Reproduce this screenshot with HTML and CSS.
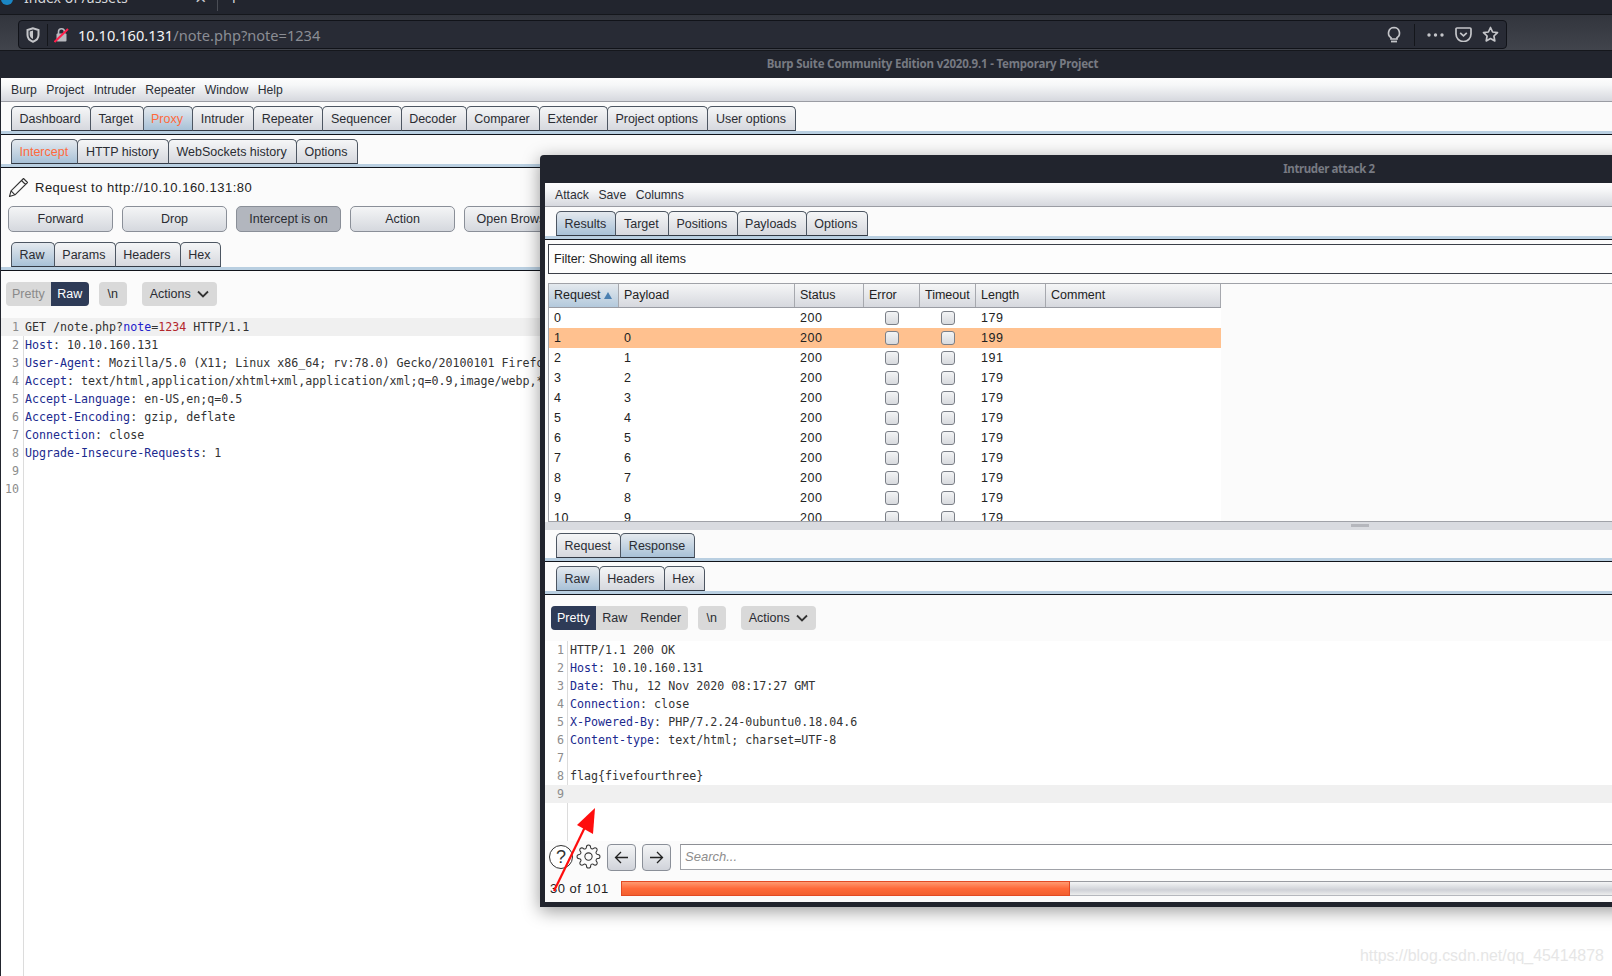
FILE: index.html
```html
<!DOCTYPE html>
<html lang="en">
<head>
<meta charset="utf-8">
<title>Burp Suite</title>
<link rel="stylesheet" href="styles.css">
</head>
<body>
<div class="page">
  <div class="tabstrip">
    <span class="favicon"></span>
    <span class="tabtitle">Index of /assets</span>
    <span class="tabclose">×</span>
    <span class="tabsep"></span>
    <span class="tabplus">+</span>
  </div>
  <div class="navbar">
    <div class="urlbar">
      <svg class="ic-shield" width="14" height="16" viewBox="0 0 14 16"><path d="M7 1.200 1.500 3v5c0 3.400 2.400 5.600 5.500 6.800 3.100-1.200 5.500-3.400 5.500-6.800V3z" fill="none" stroke="#c4c5c9" stroke-width="2"/><path d="M7 3.500v8.500c-2-1-3.300-2.400-3.300-4.500V4.600z" fill="#c4c5c9"/></svg>
      <span class="urlsep"></span>
      <svg class="ic-lock" width="15" height="16" viewBox="0 0 15 16"><rect x="2.500" y="6.500" width="10" height="8" rx="1" fill="#b9bac0"/><path d="M4.500 7V4.800a3 3 0 0 1 6 0V7" fill="none" stroke="#b9bac0" stroke-width="1.600"/><path d="M0.500 15 14 2" stroke="#ff1f4b" stroke-width="2"/></svg>
      <span class="url"><b>10.10.160.131</b>/note.php?note=1234</span>
      <span class="urlgrow"></span>
      <svg class="ic-bulb" width="16" height="18" viewBox="0 0 16 18"><path d="M8 1.500a5.500 5.500 0 0 0-3 10.100V13h6v-1.400A5.500 5.500 0 0 0 8 1.500z" fill="none" stroke="#c4c5c9" stroke-width="1.700"/><path d="M5 15.500h6" stroke="#c4c5c9" stroke-width="1.800"/></svg>
      <span class="urlsep urlsep-r"></span>
      <svg class="ic-dots" width="17" height="4" viewBox="0 0 17 4"><circle cx="2" cy="2" r="1.700" fill="#c4c5c9"/><circle cx="8.500" cy="2" r="1.700" fill="#c4c5c9"/><circle cx="15" cy="2" r="1.700" fill="#c4c5c9"/></svg>
      <svg class="ic-pocket" width="17" height="15" viewBox="0 0 17 15"><path d="M2 1h13a1 1 0 0 1 1 1v5a7.500 7.500 0 0 1-15 0V2a1 1 0 0 1 1-1z" fill="none" stroke="#c4c5c9" stroke-width="1.700"/><path d="m5.200 5.800 3.300 3 3.300-3" fill="none" stroke="#c4c5c9" stroke-width="1.700"/></svg>
      <svg class="ic-star" width="17" height="17" viewBox="0 0 17 17"><path d="m8.500 1.500 2.100 4.500 4.900.6-3.600 3.400.9 4.900-4.300-2.400-4.300 2.400.9-4.900L1.500 6.600l4.900-.6z" fill="none" stroke="#c4c5c9" stroke-width="1.700" stroke-linejoin="round"/></svg>
    </div>
  </div>
  <div class="titlebar">Burp Suite Community Edition v2020.9.1 - Temporary Project</div>

  <div class="burp">
    <div class="menu">
      <span>Burp</span><span>Project</span><span>Intruder</span><span>Repeater</span><span>Window</span><span>Help</span>
    </div>
    <div class="tabbar">
      <span class="tab t-dash">Dashboard</span><span class="tab">Target</span><span class="tab on orange">Proxy</span><span class="tab">Intruder</span><span class="tab">Repeater</span><span class="tab">Sequencer</span><span class="tab">Decoder</span><span class="tab">Comparer</span><span class="tab">Extender</span><span class="tab">Project options</span><span class="tab">User options</span>
    </div>
    <div class="tabbar">
      <span class="tab on orange">Intercept</span><span class="tab">HTTP history</span><span class="tab">WebSockets history</span><span class="tab">Options</span>
    </div>
    <div class="reqrow">
      <svg class="ic-pencil" width="21" height="21" viewBox="0 0 21 21"><path d="M1.500 19.500 3 13.800 15.500 1.500l4 4L7 17.800z M3 13.800l4 4 M13.500 3.500l4 4" fill="none" stroke="#333" stroke-width="1.100" stroke-linejoin="round"/></svg>
      <span>Request to http://10.10.160.131:80</span>
    </div>
    <div class="btnrow">
      <span class="btn">Forward</span><span class="btn">Drop</span><span class="btn pressed">Intercept is on</span><span class="btn">Action</span><span class="btn">Open Browser</span>
    </div>
    <div class="tabbar inner">
      <span class="tab on">Raw</span><span class="tab">Params</span><span class="tab">Headers</span><span class="tab">Hex</span>
    </div>
    <div class="viewbar">
      <span class="seg"><span class="seg-i pre dim">Pretty</span><span class="seg-i sel">Raw</span></span>
      <span class="seg nl">\n</span>
      <span class="seg act">Actions
        <svg width="12" height="8" viewBox="0 0 12 8"><path d="m1 1.500 5 5 5-5" fill="none" stroke="#333" stroke-width="1.800"/></svg>
      </span>
    </div>
    <div class="code">
      <div class="line hl"><span class="ln">1</span><span class="tx">GET /note.php?<i class="par">note</i>=<i class="val">1234</i> HTTP/1.1</span></div>
      <div class="line"><span class="ln">2</span><span class="tx"><i class="key">Host</i>: 10.10.160.131</span></div>
      <div class="line"><span class="ln">3</span><span class="tx"><i class="key">User-Agent</i>: Mozilla/5.0 (X11; Linux x86_64; rv:78.0) Gecko/20100101 Firefox/78.0</span></div>
      <div class="line"><span class="ln">4</span><span class="tx"><i class="key">Accept</i>: text/html,application/xhtml+xml,application/xml;q=0.9,image/webp,*/*;q=0.8</span></div>
      <div class="line"><span class="ln">5</span><span class="tx"><i class="key">Accept-Language</i>: en-US,en;q=0.5</span></div>
      <div class="line"><span class="ln">6</span><span class="tx"><i class="key">Accept-Encoding</i>: gzip, deflate</span></div>
      <div class="line"><span class="ln">7</span><span class="tx"><i class="key">Connection</i>: close</span></div>
      <div class="line"><span class="ln">8</span><span class="tx"><i class="key">Upgrade-Insecure-Requests</i>: 1</span></div>
      <div class="line"><span class="ln">9</span><span class="tx"></span></div>
      <div class="line"><span class="ln">10</span><span class="tx"></span></div>
    </div>
  </div>

  <div class="attack">
    <div class="attack-title">Intruder attack 2</div>
    <div class="attack-body">
      <div class="menu menu-a"><span>Attack</span><span>Save</span><span>Columns</span></div>
      <div class="tabbar a-tabs">
        <span class="tab on">Results</span><span class="tab">Target</span><span class="tab">Positions</span><span class="tab">Payloads</span><span class="tab">Options</span>
      </div>
      <div class="filter">Filter: Showing all items</div>
      <div class="table">
        <div class="tr th">
          <span class="sorted">Request <svg width="8" height="7" viewBox="0 0 8 7"><path d="M4 0 8 7H0z" fill="#4a7fb0"/></svg></span><span>Payload</span><span>Status</span><span>Error</span><span>Timeout</span><span>Length</span><span>Comment</span>
        </div>
        <div class="tr"><span>0</span><span></span><span>200</span><span class="c"><i class="cb"></i></span><span class="c"><i class="cb"></i></span><span>179</span><span></span></div>
        <div class="tr pick"><span>1</span><span>0</span><span>200</span><span class="c"><i class="cb"></i></span><span class="c"><i class="cb"></i></span><span>199</span><span></span></div>
        <div class="tr"><span>2</span><span>1</span><span>200</span><span class="c"><i class="cb"></i></span><span class="c"><i class="cb"></i></span><span>191</span><span></span></div>
        <div class="tr"><span>3</span><span>2</span><span>200</span><span class="c"><i class="cb"></i></span><span class="c"><i class="cb"></i></span><span>179</span><span></span></div>
        <div class="tr"><span>4</span><span>3</span><span>200</span><span class="c"><i class="cb"></i></span><span class="c"><i class="cb"></i></span><span>179</span><span></span></div>
        <div class="tr"><span>5</span><span>4</span><span>200</span><span class="c"><i class="cb"></i></span><span class="c"><i class="cb"></i></span><span>179</span><span></span></div>
        <div class="tr"><span>6</span><span>5</span><span>200</span><span class="c"><i class="cb"></i></span><span class="c"><i class="cb"></i></span><span>179</span><span></span></div>
        <div class="tr"><span>7</span><span>6</span><span>200</span><span class="c"><i class="cb"></i></span><span class="c"><i class="cb"></i></span><span>179</span><span></span></div>
        <div class="tr"><span>8</span><span>7</span><span>200</span><span class="c"><i class="cb"></i></span><span class="c"><i class="cb"></i></span><span>179</span><span></span></div>
        <div class="tr"><span>9</span><span>8</span><span>200</span><span class="c"><i class="cb"></i></span><span class="c"><i class="cb"></i></span><span>179</span><span></span></div>
        <div class="tr"><span>10</span><span>9</span><span>200</span><span class="c"><i class="cb"></i></span><span class="c"><i class="cb"></i></span><span>179</span><span></span></div>
      </div>
      <div class="splitter"><span class="grip"></span></div>
      <div class="tabbar a-sub">
        <span class="tab">Request</span><span class="tab on">Response</span>
      </div>
      <div class="tabbar a-sub2">
        <span class="tab on">Raw</span><span class="tab">Headers</span><span class="tab">Hex</span>
      </div>
      <div class="viewbar a-view">
        <span class="seg"><span class="seg-i pre sel">Pretty</span><span class="seg-i">Raw</span><span class="seg-i">Render</span></span>
        <span class="seg nl">\n</span>
        <span class="seg act">Actions
          <svg width="12" height="8" viewBox="0 0 12 8"><path d="m1 1.500 5 5 5-5" fill="none" stroke="#333" stroke-width="1.800"/></svg>
        </span>
      </div>
      <div class="code a-code">
        <div class="line"><span class="ln">1</span><span class="tx">HTTP/1.1 200 OK</span></div>
        <div class="line"><span class="ln">2</span><span class="tx"><i class="key">Host</i>: 10.10.160.131</span></div>
        <div class="line"><span class="ln">3</span><span class="tx"><i class="key">Date</i>: Thu, 12 Nov 2020 08:17:27 GMT</span></div>
        <div class="line"><span class="ln">4</span><span class="tx"><i class="key">Connection</i>: close</span></div>
        <div class="line"><span class="ln">5</span><span class="tx"><i class="key">X-Powered-By</i>: PHP/7.2.24-0ubuntu0.18.04.6</span></div>
        <div class="line"><span class="ln">6</span><span class="tx"><i class="key">Content-type</i>: text/html; charset=UTF-8</span></div>
        <div class="line"><span class="ln">7</span><span class="tx"></span></div>
        <div class="line"><span class="ln">8</span><span class="tx">flag{fivefourthree}</span></div>
        <div class="line hl"><span class="ln">9</span><span class="tx"></span></div>
      </div>
      <div class="searchrow">
        <span class="help">?</span>
        <svg class="gear" width="25" height="25" viewBox="0 0 24 24"><circle cx="12" cy="12" r="3.500" fill="none" stroke="#333" stroke-width="1"/><path d="M19.400 15a1.650 1.650 0 0 0 .33 1.820l.06.06a2 2 0 0 1 0 2.830 2 2 0 0 1-2.830 0l-.06-.06a1.650 1.650 0 0 0-1.820-.33 1.650 1.650 0 0 0-1 1.510V21a2 2 0 0 1-2 2 2 2 0 0 1-2-2v-.09A1.650 1.650 0 0 0 9 19.400a1.650 1.650 0 0 0-1.820.33l-.06.06a2 2 0 0 1-2.830 0 2 2 0 0 1 0-2.830l.06-.06a1.650 1.650 0 0 0 .33-1.820 1.650 1.650 0 0 0-1.510-1H3a2 2 0 0 1-2-2 2 2 0 0 1 2-2h.09A1.650 1.650 0 0 0 4.600 9a1.650 1.650 0 0 0-.33-1.820l-.06-.06a2 2 0 0 1 0-2.830 2 2 0 0 1 2.830 0l.06.06a1.650 1.650 0 0 0 1.820.33H9a1.650 1.650 0 0 0 1-1.510V3a2 2 0 0 1 2-2 2 2 0 0 1 2 2v.09a1.650 1.650 0 0 0 1 1.510 1.650 1.650 0 0 0 1.820-.33l.06-.06a2 2 0 0 1 2.830 0 2 2 0 0 1 0 2.830l-.06.06a1.650 1.650 0 0 0-.33 1.820V9a1.650 1.650 0 0 0 1.510 1H21a2 2 0 0 1 2 2 2 2 0 0 1-2 2h-.09a1.650 1.650 0 0 0-1.510 1z" fill="none" stroke="#333" stroke-width="1"/></svg>
        <span class="nav"><svg width="15" height="13" viewBox="0 0 15 13"><path d="M14 6.500H1.500M7 1 1.500 6.500 7 12" fill="none" stroke="#222" stroke-width="1.300"/></svg></span>
        <span class="nav"><svg width="15" height="13" viewBox="0 0 15 13"><path d="M1 6.500h12.500M8 1l5.500 5.500L8 12" fill="none" stroke="#222" stroke-width="1.300"/></svg></span>
        <span class="search">Search...</span>
      </div>
      <div class="statusrow">
        <span class="count">30 of 101</span>
        <span class="track"><span class="fill"></span></span>
      </div>
    </div>
  </div>

  <svg class="arrow" width="60" height="90" viewBox="0 0 60 90"><path d="M6 88 38 22" stroke="#ff0d0d" stroke-width="2.200"/><path d="M47 5 45 31 29 22z" fill="#ff0d0d"/></svg>
  <div class="watermark">https://blog.csdn.net/qq_45414878</div>
</div>
</body>
</html>
```
FILE: styles.css
```css
* { box-sizing: border-box; }
html, body { margin: 0; padding: 0; }
body { width: 1612px; height: 976px; overflow: hidden; background: #fff; font-family: "Liberation Sans", Arial, sans-serif; font-size: 12.5px; color: #222; }
i { font-style: normal; }
.page { position: relative; width: 1612px; height: 976px; display: flex; flex-direction: column; overflow: hidden; }

/* browser chrome */
.tabstrip { height: 15px; flex: none; background: #22252e; border-bottom: 1px solid #15171c; overflow: hidden; color: #d6d7da; font-family: "Noto Sans", sans-serif; font-size: 14px; position: relative; }
.favicon { position: absolute; left: 1px; top: -7px; width: 12px; height: 12px; border-radius: 50%; background: #1a86c4; }
.tabtitle { position: absolute; left: 24px; top: -12px; line-height: 20px; }
.tabclose { position: absolute; left: 195px; top: -12px; font-size: 20px; line-height: 20px; color: #c9cacd; }
.tabsep { position: absolute; left: 217px; top: 0; width: 1px; height: 11px; background: #4a4d55; }
.tabplus { position: absolute; left: 229px; top: -10px; font-size: 17px; line-height: 18px; }
.navbar { height: 36px; flex: none; padding: 5px 105px 1px 18px; background: linear-gradient(#32353d, #41444c); border-bottom: 1px solid #15171c; }
.urlbar { height: 29px; background: #282b35; border: 1px solid #111319; border-radius: 4px; display: flex; align-items: center; padding: 0 5px 0 7px; }
.ic-shield { flex: none; }
.urlsep { width: 1px; height: 22px; background: #14161b; margin: 0 6px 0 7px; flex: none; }
.ic-lock { flex: none; }
.url { margin-left: 9px; color: #8b8d94; font-family: "Noto Sans", sans-serif; font-size: 14.6px; white-space: nowrap; }
.url b { font-weight: 400; color: #f4f4f5; }
.urlgrow { flex: 1; }
.urlsep-r { margin: 0 12px 0 12px; }
.ic-dots { margin-right: 11px; flex: none; }
.ic-pocket { margin-right: 10px; flex: none; }
.ic-star { flex: none; margin-right: 2px; }
.titlebar { height: 27px; flex: none; background: #22252e; color: #777a82; font-family: "Noto Sans", sans-serif; font-weight: 700; font-size: 11.5px; letter-spacing: -.2px; text-align: center; line-height: 26px; padding-left: 253px; }

/* burp window */
.burp { flex: 1; min-height: 0; display: flex; flex-direction: column; background: #fbfbfb; border-left: 1px solid #22252e; }
.menu { height: 24px; flex: none; display: flex; gap: 9.5px; align-items: center; padding: 0 0 0 10px; background: linear-gradient(#fdfdfd, #f6f7f8 30%, #d6d8de); border-bottom: 1px solid #9a9ca3; color: #2c2f36; font-size: 12.2px; }
.tabbar { flex: none; display: flex; padding: 4px 0 4px 10px; background: linear-gradient(to top, #10131a 0 1px, #b9cfe1 1px 4px, transparent 4px) #fbfbfb; }
.tab { height: 25px; line-height: 24px; padding: 0 9.3px 0 7.5px; margin-right: -1px; border: 1px solid #4d5662; border-bottom-color: #333a45; border-radius: 5px 5px 0 0; background: linear-gradient(#f5f6f7, #d6d8de); color: #2a2c32; white-space: nowrap; }
.tab.on { background: linear-gradient(#e4e9ee, #a8c1d7); }
.tab.orange { color: #ff6a3c; }
.reqrow { height: 38px; flex: none; display: flex; align-items: center; gap: 6px; padding: 0 0 0 7px; font-size: 13px; letter-spacing: .5px; }
.btnrow { height: 26px; flex: none; display: flex; gap: 9px; padding-left: 7px; }
.btn { width: 105px; flex: none; line-height: 24px; text-align: center; border: 1px solid #8a8f98; border-radius: 5px; background: linear-gradient(#f4f5f6, #d5d8de); white-space: nowrap; color: #2a2c32; }
.btn.pressed { background: #b2b6be; }
.tabbar.inner { margin-top: 10px; padding-top: 0; }
.viewbar { flex: none; height: 47px; display: flex; gap: 10px; padding: 11px 0 0 5px; background: #fbfbfb; }
.seg { height: 24px; display: flex; align-items: center; border-radius: 4px; background: #d9d9d9; color: #2a2c32; overflow: hidden; }
.seg-i { height: 24px; line-height: 24px; padding: 0 6.5px; }
.seg-i.pre { padding: 0 6px; }
.seg-i.dim { color: #8a8a8a; }
.seg-i.sel { background: #2e3b57; color: #fff; }
.seg.nl { width: 28px; justify-content: center; }
.seg.act { width: 75px; margin-left: 5px; justify-content: center; gap: 6px; }
.code { flex: 1; min-height: 0; background: linear-gradient(to right, transparent 22px, #dcdcdc 22px 23px, transparent 23px) #fff; font-family: "DejaVu Sans Mono", monospace; font-size: 11.65px; color: #333; }
.line { height: 18px; line-height: 18px; display: flex; white-space: pre; }
.line.hl { background: #f0f0f0; }
.ln { flex: none; width: 20px; padding-right: 2px; text-align: right; color: #8c8c8c; }
.tx { padding-left: 4px; }
.key { color: #1b2a8f; }
.par { color: #2222cc; }
.val { color: #b3262b; }

/* intruder window */
.attack { position: absolute; left: 540px; top: 155px; width: 1580px; height: 752px; background: #21242d; border-radius: 4px 4px 0 0; padding: 0 5px 5px; display: flex; flex-direction: column; box-shadow: 0 4px 18px rgba(0,0,0,.4); }
.attack-title { height: 28px; flex: none; text-align: center; line-height: 27px; color: #777a82; font-family: "Noto Sans", sans-serif; font-weight: 700; font-size: 11.5px; letter-spacing: -.4px; padding-right: 2px; }
.attack-body { flex: 1; min-height: 0; background: #fbfbfb; display: flex; flex-direction: column; }
.a-tabs { padding-left: 11px; }
.filter { flex: none; height: 30px; margin: 4px 0 0 3px; border: 1px solid #3b3f48; border-right: 0; line-height: 28px; padding-left: 5px; background: #fdfdfd; }
.table { flex: none; height: 239px; margin: 9px 0 0 3px; border: 1px solid #a0a2a8; border-right: 0; overflow: hidden; background: #fbfbfb; }
.tr { width: 672px; height: 20px; display: grid; grid-template-columns: 70px 176px 69px 56px 56px 70px 175px; align-items: center; background: #fff; letter-spacing: .6px; }
.tr > span { padding-left: 5px; height: 20px; line-height: 20px; }
.tr .c { padding-left: 0; display: flex; justify-content: center; align-items: center; }
.tr.pick { background: #ffc18f; }
.th { height: 24px; background: linear-gradient(#f5f6f7, #d6d8de); border-bottom: 1px solid #9a9ca3; letter-spacing: 0; }
.th > span { height: 23px; line-height: 22px; border-right: 1px solid #a6a8ae; }
.th .sorted { background: linear-gradient(#e4e9ee, #b3c9dc); }
.cb { display: block; width: 14px; height: 14px; border: 1px solid #7b7f87; border-radius: 3px; background: linear-gradient(#f3f4f5, #d8dade); }
.splitter { flex: none; height: 8px; background: #d9dbe0; }
.grip { position: absolute; left: 811px; width: 18px; height: 3px; margin-top: 2px; background: #b5b7bd; }
.a-sub { padding: 3px 0 4px 11px; }
.a-sub2 { padding: 4px 0 4px 11px; }
.a-view { height: 46px; padding: 11px 0 0 6px; }
.a-code { flex: none; height: 200px; }
.a-code .ln { width: 21px; }
.searchrow { flex: none; height: 30px; display: flex; align-items: flex-start; padding: 3px 0 0 4px; background: #fbfbfb; position: relative; }
.help { width: 24px; height: 24px; margin-top: 1px; flex: none; border: 1.5px solid #333; border-radius: 50%; text-align: center; font-size: 18px; line-height: 22px; color: #333; background: #fff; }
.gear { flex: none; margin: 0 0 0 3px; }
.nav { width: 29px; height: 27px; flex: none; margin: 0 0 0 6px; display: flex; align-items: center; justify-content: center; border: 1px solid #8a8f98; border-radius: 4px; background: linear-gradient(#f4f5f6, #d0d3da); }
.gear + .nav { margin-left: 6px; }
.search { flex: 1; height: 26px; margin-left: 9px; border: 1px solid #a0a2a8; border-right: 0; border-top-color: #8d8f95; padding-left: 4px; line-height: 24px; font-style: italic; color: #8d8d8d; background: #fff; font-size: 13px; }
.statusrow { flex: 1; display: flex; align-items: flex-start; padding: 10px 0 0 5px; background: #fbfbfb; }
.count { width: 71px; flex: none; line-height: 15px; font-size: 13px; color: #222; letter-spacing: .5px; }
.track { flex: 1; height: 15px; border-top: 1px solid #999ba1; border-bottom: 1px solid #b5b7bd; background: linear-gradient(#f4f5f6, #cfd1d7 60%, #eceded); }
.fill { display: block; width: 449px; height: 15px; margin-top: -1px; border: 1px solid #e24a24; background: linear-gradient(#ff9a70, #ff6a3a 50%, #f2602f); }

/* overlays */
.arrow { position: absolute; left: 548px; top: 803px; }
.watermark { position: absolute; left: 1360px; top: 947px; font-size: 15.9px; color: #e6e6e6; white-space: nowrap; }
```
